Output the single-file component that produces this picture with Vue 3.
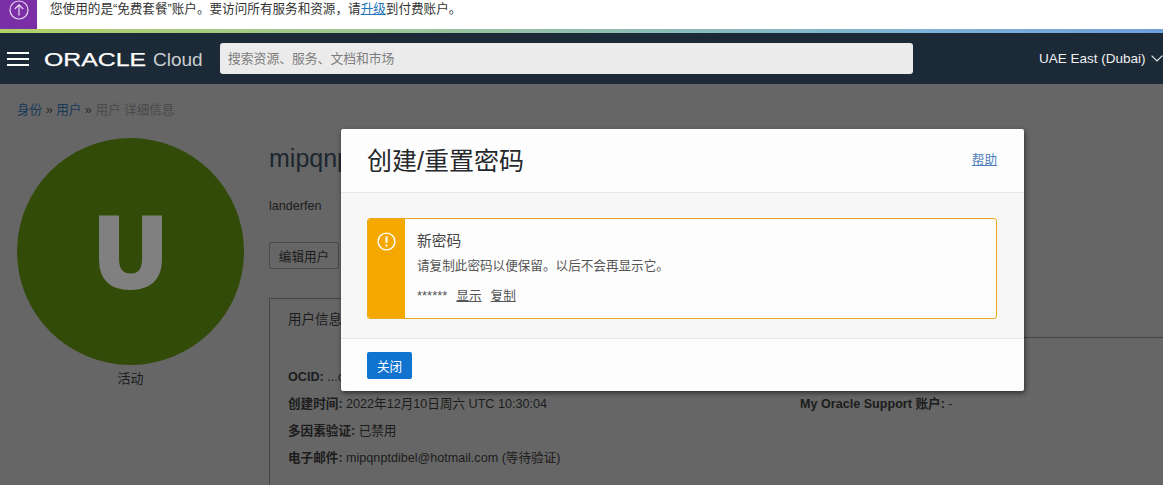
<script setup>
const rows = [
  { k: '创建时间:', v: '2022年12月10日周六 UTC 10:30:04' },
  { k: '多因素验证:', v: '已禁用' },
  { k: '电子邮件:', v: 'mipqnptdibel@hotmail.com (等待验证)' }
]
</script>

<template>
  <div class="page">
    <header class="banner">
      <div class="banner-icon">
        <svg width="20" height="20" viewBox="0 0 20 20" fill="none" stroke="#e9dcf2" stroke-width="1.2">
          <circle cx="10" cy="10" r="9" />
          <path d="M10 15.5V4.8M5.8 9 10 4.8 14.2 9" />
        </svg>
      </div>
      <p class="banner-text">您使用的是“免费套餐”账户。要访问所有服务和资源，请<a>升级</a>到付费账户。</p>
    </header>
    <div class="stripe"></div>
    <nav class="navbar">
      <div class="burger"><i></i><i></i><i></i></div>
      <svg class="logo" width="160" height="24" viewBox="0 0 160 24">
        <text x="0" y="19" class="logo-oracle" textLength="102" lengthAdjust="spacingAndGlyphs">ORACLE</text>
        <text x="109" y="19" class="logo-cloud">Cloud</text>
      </svg>
      <div class="search">搜索资源、服务、文档和市场</div>
      <div class="region">
        <span>UAE East (Dubai)</span>
        <svg width="12" height="7" viewBox="0 0 12 7" fill="none" stroke="#e6e8ea" stroke-width="1.2"><path d="M.6.6 6 6l5.4-5.4" /></svg>
      </div>
    </nav>

    <main class="content">
      <div class="crumbs">
        <a>身份</a><b>»</b><a>用户</a><b>»</b><span>用户 详细信息</span>
      </div>
      <div class="detail">
        <aside class="side">
          <div class="avatar">U</div>
          <div class="status">活动</div>
        </aside>
        <section class="main">
          <h1 class="user-title">mipqnptdibel</h1>
          <div class="user-sub">landerfen</div>
          <div class="actions"><button class="btn">编辑用户</button></div>
          <div class="tabs"><div class="tab">用户信息</div></div>
          <div class="info">
            <div class="col">
              <div class="row"><strong>OCID:</strong> ...c</div>
              <div v-for="r in rows" :key="r.k" class="row"><strong>{{ r.k }}</strong> {{ r.v }}</div>
            </div>
            <div class="col col-right">
              <div class="row"><strong>My Oracle Support 账户:</strong> -</div>
            </div>
          </div>
        </section>
      </div>
    </main>

    <div class="modal">
      <div class="modal-head">
        <h2>创建/重置密码</h2>
        <a class="help">帮助</a>
      </div>
      <div class="modal-body">
        <div class="alert">
          <div class="alert-side">
            <svg width="19" height="19" viewBox="0 0 19 19" fill="none" stroke="#fff" stroke-width="1.4">
              <circle cx="9.5" cy="9.5" r="8.4" />
              <path d="M9.5 4.6v6.2" stroke-width="2" />
              <circle cx="9.5" cy="13.6" r="1.1" fill="#fff" stroke="none" />
            </svg>
          </div>
          <div class="alert-main">
            <div class="alert-title">新密码</div>
            <div class="alert-desc">请复制此密码以便保留。以后不会再显示它。</div>
            <div class="alert-links"><span class="stars">******</span><a>显示</a><a>复制</a></div>
          </div>
        </div>
      </div>
      <div class="modal-foot"><button class="primary">关闭</button></div>
    </div>
  </div>
</template>

<style>
html, body { margin: 0; background: #666; }
</style>

<style scoped>
.page {
  position: relative;
  width: 1163px;
  height: 485px;
  overflow: hidden;
  background: #666;
  font-family: "Liberation Sans", "Noto Sans CJK SC", sans-serif;
  font-size: 12.6px;
  color: #1c1c1c;
}
p, h1, h2 { margin: 0; font-weight: 400; }
.banner { display: flex; height: 29px; background: #fff; }
.banner-icon {
  width: 37px;
  display: flex;
  align-items: flex-start;
  justify-content: center;
  background: #7b2fa6;
}
.banner-text { padding-left: 13px; font-size: 12.6px; line-height: 19px; color: #333; }
.banner-text a { color: #1d74b8; text-decoration: underline; }
.stripe { height: 4px; background: linear-gradient(90deg, #b2d267, #7db3d8 80%, #6f9fdc); }
.navbar { display: flex; align-items: center; height: 51px; background: #1c2936; }
.burger { display: flex; flex-direction: column; gap: 4px; width: 22px; margin-left: 7px; }
.burger i { display: block; height: 2px; background: #fff; }
.logo { margin-left: 15px; }
.logo-oracle { fill: #fff; stroke: #fff; stroke-width: .25; font-size: 18.5px; font-family: "Liberation Sans", sans-serif; }
.logo-cloud { fill: #c9ced3; font-size: 19px; font-family: "Liberation Sans", sans-serif; }
.search {
  box-sizing: border-box;
  width: 693px;
  height: 31px;
  margin-left: 16px;
  padding-left: 8px;
  border-radius: 3px;
  background: #ebebeb;
  color: #7d7d7d;
  font-size: 12.8px;
  line-height: 31px;
}
.region {
  display: flex;
  align-items: center;
  gap: 5px;
  margin-left: 126px;
  color: #eef0f2;
  font-size: 13.5px;
  white-space: nowrap;
}
.content { padding: 17px 0 0 17px; }
.crumbs { display: flex; font-size: 12.6px; line-height: 18px; color: #4a4a4a; }
.crumbs a { color: #16395a; }
.crumbs b { width: 14px; text-align: center; font-weight: 400; color: #2c2c2c; }
.detail { display: flex; margin-top: 19px; }
.side { width: 227px; text-align: center; }
.avatar {
  width: 227px;
  height: 227px;
  border-radius: 50%;
  background: #334b08;
  color: #808080;
  font-family: "Open Sans", sans-serif;
  font-weight: 800;
  font-size: 103px;
  line-height: 222px;
}
.status { margin-top: 6px; line-height: 16px; font-size: 13px; }
.main { flex: 1; margin-left: 25px; }
.user-title {
  white-space: nowrap;
  font-size: 25px;
  line-height: 38px;
  margin-top: 1px;
  color: #1c2630;
}
.user-sub { margin-top: 21px; line-height: 16px; }
.actions { margin-top: 28px; }
.btn {
  box-sizing: border-box;
  height: 27px;
  width: 70px;
  padding: 0;
  border: 1px solid #4a4a4a;
  border-radius: 2px;
  background: #666;
  color: #1c1c1c;
  font: inherit;
}
.tabs { height: 39px; margin-top: 29px; border-bottom: 1px solid #444; }
.tab {
  box-sizing: border-box;
  width: 100px;
  height: 40px;
  padding: 9px 0 0 18px;
  border: 1px solid #444;
  border-bottom: 0;
  font-size: 13.5px;
  background: #666;
}
.info {
  display: flex;
  height: 200px;
  padding-top: 26px;
  padding-left: 18px;
  border-left: 1px solid #444;
}
.col { width: 512px; flex: none; }
.col-right { padding-top: 27px; }
.row { line-height: 27px; }
.row strong { font-weight: 700; }
.modal {
  position: absolute;
  left: 341px;
  top: 129px;
  width: 683px;
  height: 262px;
  display: flex;
  flex-direction: column;
  border-radius: 2px;
  background: #fdfdfd;
  box-shadow: 1px 2px 5px rgba(0, 0, 0, .55);
}
.modal-head {
  display: flex;
  align-items: center;
  justify-content: space-between;
  box-sizing: border-box;
  height: 64px;
  padding: 0 27px 4px 26px;
  border-bottom: 1px solid #e6e6e6;
}
.modal-head h2 { font-size: 25px; color: #25282c; }
.help { font-size: 12.6px; color: #4f7fbb; text-decoration: underline; }
.modal-body { height: 145px; flex: none; box-sizing: border-box; padding: 25px 27px 0 26px; background: #f7f7f7; }
.alert {
  display: flex;
  height: 101px;
  box-sizing: border-box;
  border: 1px solid #e8a923;
  border-radius: 3px;
  background: #fdfdfd;
  overflow: hidden;
}
.alert-side { width: 37px; padding: 13px 0 0 9px; box-sizing: border-box; background: #f5a800; }
.alert-main { padding: 12px 0 0 12px; color: #555; }
.alert-title { font-size: 14.7px; line-height: 20px; color: #454545; }
.alert-desc { margin-top: 8px; line-height: 14px; }
.alert-links { display: flex; gap: 9px; margin-top: 15px; line-height: 16px; }
.alert-links a { text-decoration: underline; }
.stars { font-size: 13px; }
.modal-foot { flex: 1; padding: 13px 26px 0; border-top: 1px solid #e6e6e6; }
.primary {
  display: block;
  width: 45px;
  height: 27px;
  padding: 0;
  border: 0;
  border-radius: 2px;
  background: #0f73cf;
  color: #fff;
  font: inherit;
}
</style>
